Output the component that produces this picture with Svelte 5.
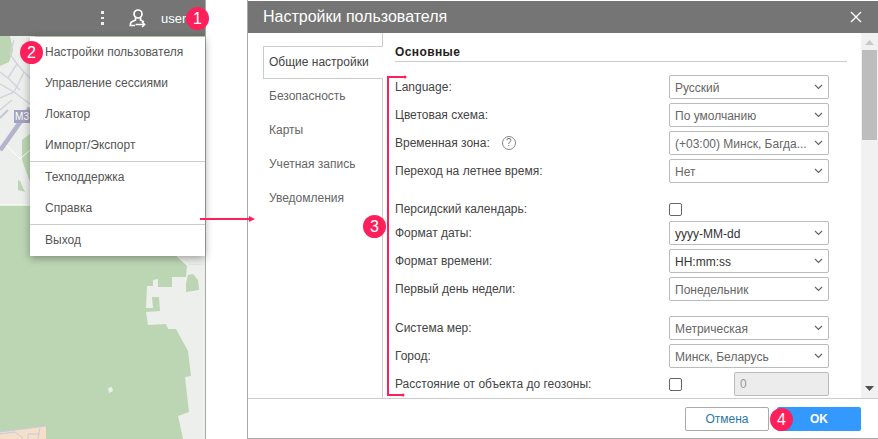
<script lang="ts">
	const menuGroups = [
		['Настройки пользователя', 'Управление сессиями', 'Локатор', 'Импорт/Экспорт'],
		['Техподдержка', 'Справка'],
		['Выход']
	]
	const tabs = ['Общие настройки', 'Безопасность', 'Карты', 'Учетная запись', 'Уведомления']

	const groups = [
		[
			{ label: 'Language:', value: 'Русский' },
			{ label: 'Цветовая схема:', value: 'По умолчанию' },
			{ label: 'Временная зона:', value: '(+03:00) Минск, Багда...', help: true },
			{ label: 'Переход на летнее время:', value: 'Нет' }
		],
		[
			{ label: 'Формат даты:', value: 'yyyy-MM-dd', dark: true },
			{ label: 'Формат времени:', value: 'HH:mm:ss', dark: true },
			{ label: 'Первый день недели:', value: 'Понедельник' }
		],
		[
			{ label: 'Система мер:', value: 'Метрическая' },
			{ label: 'Город:', value: 'Минск, Беларусь' }
		]
	]
</script>

{#snippet select(value: string, dark = false)}
	<div class="select" class:dark>
		<span>{value}</span>
		<svg width="9" height="6" viewBox="0 0 9 6"><path d="M1 1l3.500 3.500L8 1" fill="none" stroke="#666" stroke-width="1.2" /></svg>
	</div>
{/snippet}

{#snippet row(r: { label: string; value: string; help?: boolean; dark?: boolean })}
	<div class="row">
		<div class="label">
			{r.label}
			{#if r.help}<span class="help">?</span>{/if}
		</div>
		{@render select(r.value, r.dark)}
	</div>
{/snippet}

<div class="page">
	<section class="left">
		<header class="topbar">
			<span class="dots"><i></i><i></i><i></i></span>
			<svg class="user-icon" width="18" height="19" viewBox="0 0 18 19" fill="none" stroke="#fff" stroke-width="1.7">
				<circle cx="9" cy="5" r="4" />
				<path d="M6.500 9v2L2.500 13c-1 .7-1.200 1.800-1.200 3.500H6M11.500 9v2l3.500 2" />
				<path d="M6.500 15.500h9M13 13l2.700 2.500L13 18" stroke-width="1.500" />
			</svg>
			<span class="username">user</span>
		</header>
		<div class="map">
			<svg width="205" height="403" viewBox="0 36 205 403">
				<rect x="0" y="36" width="205" height="403" fill="#bcd5b3" />
				<path d="M0 66L9 62 13 50 10 36H35V205H0Z" fill="#edefec" />
				<path d="M22 140L35 130V196L22 160Z" fill="#bcd5b3" />
				<path d="M0 205H32" stroke="#f6f8f4" stroke-width="1.500" />
				<path d="M6 145L20 159 30 150" fill="none" stroke="#fff" stroke-width="1" />
				<path d="M18 190L25 192 20 181 18 180Z" fill="#bcd5b3" />
				<g fill="none" stroke="#d2d2e0" stroke-width="1.400">
					<path d="M14 40L10 54 17 64 8 78 0 72M17 64L24 72 14 92 0 84M24 72L30 78M14 92L30 104M8 78L20 90M0 98L14 92M0 110L12 100" />
				</g>
				<path d="M0 150L30 108" stroke="#b3b3cc" stroke-width="5" fill="none" />
				<path d="M0 146L28 106" stroke="#e8e8f0" stroke-width="1.200" fill="none" />
				<path d="M0 118L8 110" stroke="#c4c4d6" stroke-width="2" fill="none" />
				<path d="M177 256L187 265 205 264V256Z" fill="#edefec" />
				<path d="M177 256L187 265" stroke="#fff" stroke-width="1" />
				<path d="M187 265L186 277H172V287H158V279L153 280V286H147L146 308H153L152 297H159L160 311 146 312 148 325 166 324 168 329H176L188 351 191 376 185 377 189 412 178 416 183 439H205V264Z" fill="#edefec" />
				<path d="M188 275L193 274 198 280 199 290 186 292 186 283Z" fill="#bcd5b3" />
				<path d="M108 388L112 387 113 391 109 393Z" fill="#edefec" />
				<path d="M0 432L46 426V439H0Z" fill="#f5dfc9" />
				<path d="M0 434L15 432 23 438M40 428L38 439M28 439V434H40M46 426L0 432" fill="none" stroke="#c9c9df" stroke-width="1" />
			</svg>
			<div class="shield">М3</div>
			<nav class="menu">
				{#each menuGroups as group}
					<ul>
						{#each group as item}
							<li>{item}</li>
						{/each}
					</ul>
				{/each}
			</nav>
		</div>
	</section>

	<section class="dialog">
		<header class="dialog-head">
			<h2>Настройки пользователя</h2>
			<svg width="12" height="12" viewBox="0 0 12 12"><path d="M1 1l10 10M11 1L1 11" stroke="#fff" stroke-width="1.400" /></svg>
		</header>
		<div class="dialog-body">
			<aside class="tabs">
				{#each tabs as tab, i}
					<div class="tab" class:active={i === 0}>{tab}</div>
				{/each}
			</aside>
			<div class="content">
				<h3>Основные</h3>
				{#each groups[0] as r}
					{@render row(r)}
				{/each}
				<div class="row check-row">
					<div class="label">Персидский календарь:</div>
					<span class="checkbox"></span>
				</div>
				{#each groups[1] as r}
					{@render row(r)}
				{/each}
				<div class="group-gap"></div>
				{#each groups[2] as r}
					{@render row(r)}
				{/each}
				<div class="row">
					<div class="label">Расстояние от объекта до геозоны:</div>
					<div class="distance">
						<span class="checkbox"></span>
						<div class="num-input">0</div>
					</div>
				</div>
			</div>
			<div class="scrollbar">
				<svg width="9" height="5" viewBox="0 0 9 5"><path d="M0 5L4.500 0 9 5Z" fill="#c8c8c8" /></svg>
				<div class="thumb"></div>
				<svg class="down" width="9" height="5" viewBox="0 0 9 5"><path d="M0 0L4.500 5 9 0Z" fill="#505050" /></svg>
			</div>
		</div>
		<footer class="dialog-foot">
			<button class="cancel">Отмена</button>
			<button class="ok">OK</button>
		</footer>
	</section>

	<!-- Annotation layer -->
	<svg class="marks" width="878" height="439" viewBox="0 0 878 439">
		<g stroke="#ff1f5b" stroke-width="2" fill="none">
			<path d="M405 77H388V395H403" />
			<path d="M200 219H250" />
		</g>
		<path d="M249 216L255 219 249 222Z" fill="#ff1f5b" />
		<circle cx="405" cy="77" r="1.500" fill="#ff1f5b" />
		<circle cx="403" cy="395" r="1.500" fill="#ff1f5b" />
	</svg>
	<span class="badge" style="left: 186px; top: 7px">1</span>
	<span class="badge" style="left: 20px; top: 41px">2</span>
	<span class="badge" style="left: 363px; top: 215px">3</span>
	<span class="badge" style="left: 770px; top: 408px">4</span>
</div>

<style>
	:global(body) {
		margin: 0;
		background: #fff;
	}

	.page {
		position: relative;
		display: flex;
		width: 878px;
		height: 439px;
		overflow: hidden;
		font-family: 'Liberation Sans', Arial, sans-serif;
		font-size: 12px;
		color: #444;
		background: #fff;
	}

	.left {
		display: flex;
		flex-direction: column;
		width: 205px;
		border-right: 1px solid #a8a8a8;
		flex-shrink: 0;
	}

	.topbar {
		display: flex;
		align-items: center;
		height: 36px;
		background: #757575;
		color: #fff;
		padding-left: 101px;
		box-sizing: border-box;
	}

	.dots {
		display: flex;
		flex-direction: column;
		gap: 3px;
		width: 3px;
		margin-right: 25px;
	}

	.dots i {
		width: 3px;
		height: 2.500px;
		background: #eee;
		display: block;
	}

	.user-icon {
		margin-right: 14px;
	}

	.username {
		font-size: 13px;
	}

	.map {
		position: relative;
		flex: 1;
		min-height: 0;
	}

	.map svg {
		display: block;
	}

	.shield {
		position: absolute;
		left: 14px;
		top: 74px;
		width: 16px;
		height: 13px;
		background: #a2a2bd;
		color: #fff;
		font-size: 10px;
		line-height: 13px;
		text-align: center;
	}

	.menu {
		position: absolute;
		left: 30px;
		top: 1px;
		width: 175px;
		background: #fff;
		box-shadow: 0 2px 8px rgba(0, 0, 0, 0.35);
		color: #555;
	}

	.menu ul {
		list-style: none;
		margin: 0;
		padding: 0;
		border-bottom: 1px solid #ccc;
	}

	.menu ul:last-child {
		border-bottom: 0;
	}

	.menu li {
		height: 31px;
		line-height: 30px;
		padding-left: 15px;
	}

	.dialog {
		display: flex;
		flex-direction: column;
		margin-left: 41px;
		flex: 1;
		min-width: 0;
		border-left: 1px solid #a8a8a8;
		border-bottom: 1px solid #a8a8a8;
		padding-top: 1px;
		box-sizing: border-box;
		height: 439px;
	}

	.dialog-head {
		display: flex;
		align-items: center;
		justify-content: space-between;
		height: 32px;
		flex-shrink: 0;
		background: #757575;
		color: #fff;
		padding: 0 16px 0 15px;
	}

	.dialog-head h2 {
		margin: 0;
		font-size: 16px;
		font-weight: 400;
	}

	.dialog-body {
		display: flex;
		flex: 1;
		min-height: 0;
		border-bottom: 1px solid #ccc;
	}

	.tabs {
		width: 135px;
		flex-shrink: 0;
		padding: 13px 0 0 15px;
		box-sizing: border-box;
		border-right: 1px solid #ccc;
		color: #666;
	}

	.tab {
		height: 34px;
		line-height: 32px;
		padding-left: 6px;
		margin-right: -1px;
		white-space: nowrap;
	}

	.tab.active {
		box-sizing: border-box;
		height: 33px;
		line-height: 31px;
		margin-bottom: 1px;
		padding-left: 5px;
		background: #fff;
		border: 1px solid #ccc;
		border-right: 0;
		color: #444;
		position: relative;
	}

	.content {
		width: 452px;
		margin-left: 12px;
		overflow: hidden;
		flex-shrink: 0;
		color: #444;
	}

	h3 {
		margin: 0 0 11px;
		height: 28px;
		line-height: 38px;
		font-size: 12px;
		font-weight: 700;
		color: #222;
		letter-spacing: 0.4px;
		border-bottom: 1px solid #ccc;
	}

	.row {
		display: flex;
		align-items: center;
		justify-content: space-between;
		height: 28px;
		padding-right: 18px;
	}

	.label {
		display: flex;
		align-items: center;
		gap: 12px;
	}

	.help {
		display: inline-block;
		width: 12px;
		height: 12px;
		border: 1px solid #888;
		border-radius: 50%;
		font-size: 10px;
		line-height: 12px;
		text-align: center;
		color: #777;
	}

	.select {
		display: flex;
		align-items: center;
		justify-content: space-between;
		box-sizing: border-box;
		width: 160px;
		height: 24px;
		padding: 0 5px 0 5px;
		border: 1px solid #bbb;
		border-radius: 2px;
		color: #666;
		background: #fff;
		white-space: nowrap;
	}

	.select span {
		padding-top: 2px;
	}

	.select.dark {
		color: #333;
	}

	.check-row {
		height: 20px;
		margin-top: 14px;
	}

	.check-row .checkbox {
		margin-right: 147px;
	}

	.group-gap {
		height: 11px;
	}

	.checkbox {
		display: block;
		box-sizing: border-box;
		width: 13px;
		height: 13px;
		border: 1px solid #666;
		border-radius: 2px;
		background: #fff;
	}

	.distance {
		display: flex;
		align-items: center;
		justify-content: space-between;
		width: 160px;
	}

	.num-input {
		box-sizing: border-box;
		width: 95px;
		height: 24px;
		line-height: 22px;
		padding-left: 5px;
		border: 1px solid #bbb;
		border-radius: 2px;
		background: #ececec;
		color: #999;
	}

	.scrollbar {
		position: relative;
		display: flex;
		flex-direction: column;
		align-items: center;
		margin-left: auto;
		width: 17px;
		background: #f1f1f1;
		padding-top: 7px;
		box-sizing: border-box;
	}

	.scrollbar svg {
		display: block;
	}

	.thumb {
		width: 15px;
		height: 90px;
		margin-top: 5px;
		background: #bdbdbd;
	}

	.scrollbar .down {
		margin-top: auto;
		margin-bottom: 7px;
	}

	.dialog-foot {
		display: flex;
		justify-content: flex-end;
		align-items: center;
		height: 39px;
		flex-shrink: 0;
		padding-right: 17px;
		gap: 8px;
	}

	button {
		box-sizing: border-box;
		height: 24px;
		font-family: inherit;
		font-size: 12px;
		border-radius: 2px;
	}

	.cancel {
		width: 84px;
		background: #fff;
		border: 1px solid #aaa;
		color: #2c78a8;
	}

	.ok {
		width: 84px;
		background: #3399ff;
		border: 0;
		color: #fff;
		font-weight: 700;
	}

	.marks {
		position: absolute;
		left: 0;
		top: 0;
		pointer-events: none;
	}

	.badge {
		position: absolute;
		width: 23px;
		height: 23px;
		border-radius: 50%;
		background: #ff1f5b;
		color: #fff;
		font-size: 16px;
		line-height: 23px;
		text-align: center;
	}
</style>
